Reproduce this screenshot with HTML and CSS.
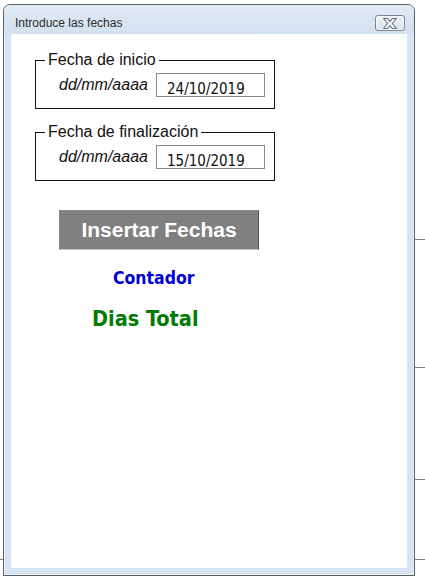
FILE: index.html
```html
<!DOCTYPE html>
<html lang="es">
<head>
<meta charset="utf-8">
<title>Introduce las fechas</title>
<link rel="stylesheet" href="styles.css">
</head>
<body>
  <div class="window">
    <div class="titlebar">
      <span class="title">Introduce las fechas</span>
      <button class="close" type="button" aria-label="Cerrar">
        <svg width="16" height="11" viewBox="0 0 16 11">
          <path d="M1.5 0.5 H5.5 L8 3.3 L10.5 0.5 H14.5 L10.3 5.5 L14.5 10.5 H10.5 L8 7.7 L5.5 10.5 H1.5 L5.7 5.5 Z" fill="#f2f4f8" stroke="#67707d" stroke-width="1.1" stroke-linejoin="round"/>
        </svg>
      </button>
    </div>
    <div class="client">
      <fieldset class="group">
        <legend class="group-title">Fecha de inicio</legend>
        <div class="row">
          <span class="hint">dd/mm/aaaa</span>
          <input class="date" type="text" value="24/10/2019" readonly>
        </div>
      </fieldset>
      <fieldset class="group group-second">
        <legend class="group-title">Fecha de finalización</legend>
        <div class="row">
          <span class="hint">dd/mm/aaaa</span>
          <input class="date" type="text" value="15/10/2019" readonly>
        </div>
      </fieldset>
      <button class="insert" type="button">Insertar Fechas</button>
      <div class="counter">Contador</div>
      <div class="total">Dias Total</div>
    </div>
  </div>
</body>
</html>
```
FILE: styles.css
```css
html, body {
  margin: 0;
  padding: 0;
}

body {
  width: 425px;
  height: 582px;
  overflow: hidden;
  background-color: #ffffff;
  background-image:
    linear-gradient(#7d7d7d, #7d7d7d),
    linear-gradient(#7d7d7d, #7d7d7d),
    linear-gradient(#7d7d7d, #7d7d7d),
    linear-gradient(#7d7d7d, #7d7d7d),
    linear-gradient(#7d7d7d, #7d7d7d);
  background-repeat: no-repeat;
  background-size: 11px 1px, 11px 1px, 11px 1px, 11px 1px, 3px 1px;
  background-position: 414px 239px, 414px 367px, 414px 479px, 414px 559px, 0 559px;
  padding-top: 4px;
  padding-left: 3px;
  box-sizing: border-box;
  font-family: "Liberation Sans", Arial, sans-serif;
}

.window {
  width: 412px;
  height: 572px;
  box-sizing: border-box;
  border: 1px solid #5b5f66;
  border-radius: 7px 7px 0 0;
  background: #d5e3f2;
  box-shadow: inset 0 0 0 1px #e9f0f8;
  display: flex;
  flex-direction: column;
}

.titlebar {
  height: 29px;
  flex: none;
  display: flex;
  align-items: flex-start;
  justify-content: space-between;
  padding: 0 9px 0 11px;
  border-radius: 6px 6px 0 0;
  background: linear-gradient(#e2eaf4, #d3e0ef);
}

.title {
  margin-top: 11px;
  font-size: 12px;
  line-height: 14px;
  color: #2b2b2b;
}

.close {
  margin-top: 10px;
  width: 30px;
  height: 16px;
  padding: 0;
  box-sizing: border-box;
  border: 1px solid #7b8594;
  border-radius: 3px;
  background: linear-gradient(#eef2f7, #d8e1ec);
  box-shadow: inset 0 0 0 1px #f6f8fb;
  display: flex;
  align-items: center;
  justify-content: center;
}

.client {
  flex: 1;
  margin: 0 7px 7px 7px;
  background: #ffffff;
  padding: 17px 0 0 24px;
  display: flex;
  flex-direction: column;
  align-items: flex-start;
}

.group {
  width: 240px;
  box-sizing: border-box;
  margin: 0;
  padding: 4px 0 11px 9px;
  border: 1px solid #141414;
  min-width: 0;
}

.group-second {
  margin-top: 14px;
}

.group-title {
  padding: 0 3px;
  font-size: 16px;
  line-height: 18px;
  color: #111111;
}

.row {
  display: flex;
  align-items: flex-start;
  margin-left: 14px;
}

.hint {
  width: 97px;
  margin-top: 3px;
  font-style: italic;
  font-size: 16px;
  line-height: 18px;
  color: #111111;
}

.date {
  width: 109px;
  height: 24px;
  box-sizing: border-box;
  margin: 0;
  padding: 7px 0 0 10px;
  border: 1px solid #8a8a8a;
  border-radius: 0;
  outline: none;
  background: #ffffff;
  font-family: "DejaVu Sans Condensed", "DejaVu Sans", sans-serif;
  font-stretch: condensed;
  font-size: 15px;
  color: #111111;
}

.insert {
  margin: 29px 0 0 24px;
  width: 200px;
  height: 40px;
  box-sizing: border-box;
  padding: 0;
  border: 1px solid #8a8a8a;
  border-right-color: #4f4f4f;
  border-bottom-color: #c4c4c4;
  background: #808080;
  color: #ffffff;
  font-family: "Liberation Sans", Arial, sans-serif;
  font-weight: bold;
  font-size: 21px;
  display: flex;
  align-items: center;
  justify-content: center;
}

.counter {
  margin: 18px 0 0 78px;
  font-family: "DejaVu Sans Condensed", "DejaVu Sans", sans-serif;
  font-stretch: condensed;
  font-weight: bold;
  font-size: 17.5px;
  line-height: 20px;
  color: #0000d4;
}

.total {
  margin: 18px 0 0 57px;
  font-family: "DejaVu Sans Condensed", "DejaVu Sans", sans-serif;
  font-stretch: condensed;
  font-weight: bold;
  font-size: 21.5px;
  line-height: 25px;
  color: #007a00;
}
```
